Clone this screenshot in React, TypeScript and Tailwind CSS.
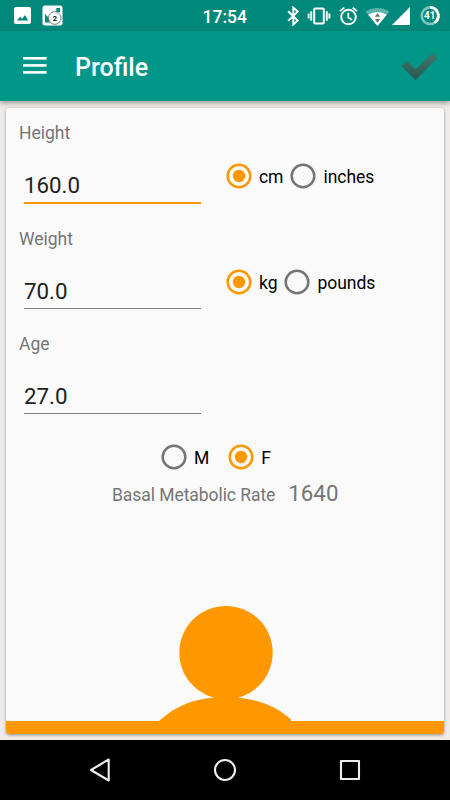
import React from "react";

function StatusBar() {
  return (
    <div className="flex h-[31px] items-center bg-[#00897b]">
      <svg className="ml-[14px] shrink-0" width="17" height="17" viewBox="0 0 17 17">
        <rect width="17" height="17" rx="2" fill="#fff" />
        <path d="M3 13.5 6 9.5 8 12 11 8 14.3 13.5Z" fill="#00897b" />
      </svg>
      <svg className="ml-[11px] shrink-0" width="21" height="21" viewBox="0 0 21 21">
        <rect x="0.5" y="0.5" width="20" height="20" rx="2.5" fill="#fff" />
        <path d="M14.3 3h3.7v4h-3.7zM3 9l3.5 3.5L8 17.5H3z" fill="#00897b" />
        <circle cx="12.8" cy="13" r="6.3" fill="#fff" stroke="#777" strokeWidth="1" />
        <text x="12.8" y="15.8" textAnchor="middle" fontSize="7.5" fontWeight="700" fill="#111" fontFamily="Roboto, sans-serif">2</text>
      </svg>
      <span className="ml-[139.5px] mt-[2px] w-[45.5px] whitespace-nowrap text-[17.5px] font-medium leading-[24px] text-white">17:54</span>
      <svg className="ml-[39px] shrink-0" width="13" height="20" viewBox="0 0 13 20" fill="none" stroke="#fff" strokeWidth="2">
        <path d="m1.2 5.2 9.5 9.3-4.4 4V1.6l4.4 4-9.5 9.3" />
      </svg>
      <svg className="ml-[7px] shrink-0" width="24" height="20" viewBox="0 0 24 20" fill="none" stroke="#fff" strokeWidth="2">
        <rect x="7.2" y="2.5" width="9.6" height="15" rx="1" />
        <path d="M4.2 5.2v9.6M1.6 7.5v5M19.8 5.2v9.6M22.4 7.5v5" strokeWidth="1.9" />
      </svg>
      <svg className="ml-[8px] shrink-0" width="20" height="20" viewBox="0 0 20 20" fill="none" stroke="#fff" strokeWidth="2">
        <circle cx="9.5" cy="11" r="7.3" />
        <path d="M9.3 6.8v4.7l3.7 2.2M1 5.1 5.3 1.6M18 5.1l-4.3-3.5" strokeWidth="1.8" />
      </svg>
      <svg className="ml-[6px] shrink-0" width="25" height="20" viewBox="0 0 25 20">
        <path d="M0.5 5.4Q12.5-1.5 24.5 5.4L12.5 20Z" fill="#5db4aa" />
        <path d="M3.2 8.8Q12.5 3.4 21.8 8.8L12.5 20Z" fill="#fff" />
        <path d="m9.8 10.8 2.7-3.8 2.7 3.8zM9.8 13h5.4l-2.7 3.8z" fill="#6e7775" />
      </svg>
      <svg className="ml-[2px] shrink-0" width="18" height="19" viewBox="0 0 18 19">
        <path d="M18 1v18H0z" fill="#fff" />
      </svg>
      <svg className="ml-[9.5px] shrink-0" width="20" height="20" viewBox="0 0 20 20">
        <circle cx="10" cy="9.7" r="8.3" fill="none" stroke="#80c4bd" strokeWidth="2.6" />
        <path d="M10 1.4a8.3 8.3 0 0 1 4.6 15.2" fill="none" stroke="#fff" strokeWidth="2.8" />
        <text x="9.7" y="13.4" textAnchor="middle" fontSize="10" fontWeight="700" fill="#fff" fontFamily="Roboto, sans-serif">41</text>
      </svg>
    </div>
  );
}

function Toolbar() {
  return (
    <header className="relative flex h-[70px] items-center bg-[#009688] shadow-[0_2px_5px_rgba(0,0,0,0.35)]">
      <svg className="ml-[23px] shrink-0" width="24" height="18" viewBox="0 0 24 18" fill="#fff">
        <rect y="0" width="23.6" height="2.6" />
        <rect y="7.1" width="23.6" height="2.6" />
        <rect y="14.1" width="23.6" height="2.6" />
      </svg>
      <h1 className="ml-[28px] mt-[3px] text-[25px] font-medium leading-[30px] text-white">Profile</h1>
      <svg className="ml-auto mr-[12px] mt-[2px]" width="37" height="30" viewBox="0 0 37 30">
        <defs>
          <linearGradient id="tick" x1="0" y1="0" x2="0" y2="1">
            <stop offset="0" stopColor="#40776f" />
            <stop offset="1" stopColor="#29574f" />
          </linearGradient>
        </defs>
        <path d="m0.5 14 5.2-5.2 9 8.8L31.5 0.8l5 5-22 22.4z" fill="url(#tick)" />
      </svg>
    </header>
  );
}

function Radio({ checked = false }: { checked?: boolean }) {
  return (
    <svg className="shrink-0" width="26" height="26" viewBox="0 0 26 26">
      <circle cx="13" cy="13" r="11.3" fill="none" stroke={checked ? "#ff9800" : "#757575"} strokeWidth="2.5" />
      {checked && <circle cx="13" cy="13" r="6.2" fill="#ff9800" />}
    </svg>
  );
}

function Option({ label, checked, className }: { label: string; checked?: boolean; className: string }) {
  return (
    <div className={`flex items-center gap-[7px] ${className}`}>
      <Radio checked={checked} />
      <span className="mt-[2px] text-[17.5px] leading-5 tracking-[-0.04px] text-black">{label}</span>
    </div>
  );
}

function Field({ label, value, active, children }: { label: string; value: string; active?: boolean; children?: React.ReactNode }) {
  return (
    <section className="h-[105.5px] pl-[13px]">
      <div className="h-[20px] text-[17.5px] leading-5 text-[#757575]">{label}</div>
      <div className="flex pl-[5px] pt-[23px]">
        <div
          className={
            active
              ? "h-[38px] w-[177px] border-b-2 border-[#ff9800] pt-[5px] text-[22.3px] leading-[28px] text-[#212121]"
              : "h-[37px] w-[177px] border-b border-[#808080] pt-[5px] text-[22.3px] leading-[28px] text-[#212121]"
          }
        >
          {value}
        </div>
        <div className="ml-[25px] mt-[-5px] flex h-[30px] items-center">{children}</div>
      </div>
    </section>
  );
}

function Avatar() {
  return (
    <div className="mt-auto">
      <svg className="ml-[148px] block" width="142" height="116" viewBox="0 0 142 116" fill="#ff9800">
        <circle cx="72" cy="47.6" r="46.7" />
        <path d="M5 116C22 100 43 92 71 92s50 8 66 22.5v2z" />
      </svg>
      <div className="h-[12.5px] bg-[#ff9800]" />
    </div>
  );
}

function NavBar() {
  return (
    <nav className="flex h-[60px] items-center bg-black">
      <svg className="ml-[88px]" width="24" height="24" viewBox="0 0 24 24" fill="none" stroke="#eee" strokeWidth="2.1" strokeLinejoin="round">
        <path d="M20.7 1.5v21L3 12z" />
      </svg>
      <svg className="ml-[101px]" width="24" height="24" viewBox="0 0 24 24" fill="none" stroke="#eee" strokeWidth="2.1">
        <circle cx="12" cy="12" r="10" />
      </svg>
      <svg className="ml-[101px]" width="24" height="24" viewBox="0 0 24 24" fill="none" stroke="#eee" strokeWidth="2.1" strokeLinejoin="round">
        <rect x="3" y="3" width="18" height="18" />
      </svg>
    </nav>
  );
}

export default function App() {
  return (
    <div className="flex h-[800px] w-[450px] flex-col overflow-hidden bg-[#eeebe8] font-[Roboto,sans-serif]">
      <StatusBar />
      <Toolbar />
      <main className="flex-1 px-[6px] pb-[6.5px] pt-[7px]">
        <div className="flex h-full flex-col overflow-hidden rounded-[3px] bg-[#fafafa] pt-[15px] shadow-[0_1px_3px_rgba(0,0,0,0.4)]">
          <Field label="Height" value="160.0" active>
            <Option label="cm" checked className="" />
            <Option label="inches" className="ml-[7px]" />
          </Field>
          <Field label="Weight" value="70.0">
            <Option label="kg" checked className="" />
            <Option label="pounds" className="ml-[7px]" />
          </Field>
          <Field label="Age" value="27.0" />
          <div className="mt-[4px] flex pl-[155px]">
            <Option label="M" className="" />
            <Option label="F" checked className="ml-[19px]" />
          </div>
          <div className="mt-[9px] flex items-baseline pl-[106px] text-[#757575]">
            <span className="text-[17.5px] leading-[28px] tracking-[-0.06px]">Basal Metabolic Rate</span>
            <span className="ml-[13px] text-[22.3px] leading-[28px]">1640</span>
          </div>
          <Avatar />
        </div>
      </main>
      <NavBar />
    </div>
  );
}
